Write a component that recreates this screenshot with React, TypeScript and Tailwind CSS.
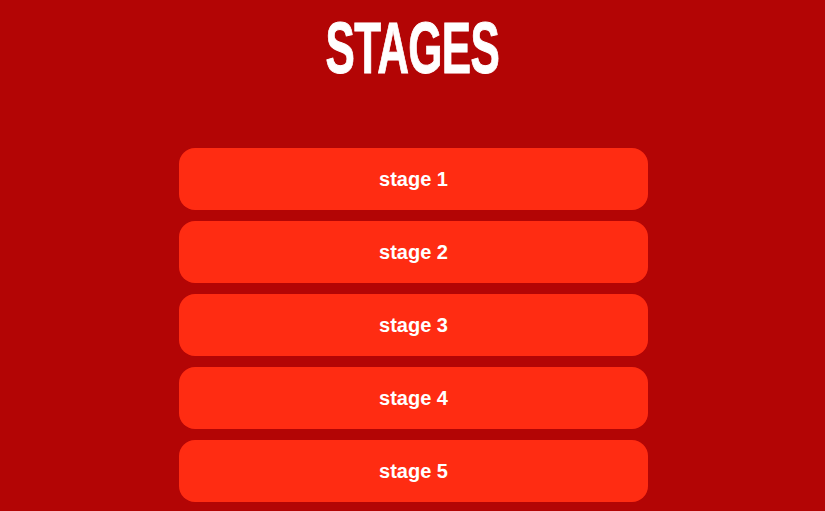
import React from 'react';

const stages = ['stage 1', 'stage 2', 'stage 3', 'stage 4', 'stage 5'];

const App = () => {
  return (
    <div className="min-h-[511px] w-full bg-[#b30505] flex flex-col items-center overflow-hidden">
      <h1
        className="mt-[6px] h-[84px] flex items-center text-white font-bold text-[72px] leading-none scale-x-[0.61] tracking-[-1px] [-webkit-text-stroke:1px_white]"
        style={{ fontFamily: '"Liberation Sans Narrow", "Liberation Sans", Arial, sans-serif' }}
      >
        STAGES
      </h1>
      <div className="mt-[58px] ml-[2px] flex flex-col gap-[11px] w-[469px]">
        {stages.map((s) => (
          <button
            key={s}
            className="h-[62px] rounded-[16px] bg-[#ff2c12] text-white font-bold text-[20px]"
            style={{ fontFamily: '"Liberation Sans", Arial, sans-serif' }}
          >
            {s}
          </button>
        ))}
      </div>
    </div>
  );
};

export default App;
